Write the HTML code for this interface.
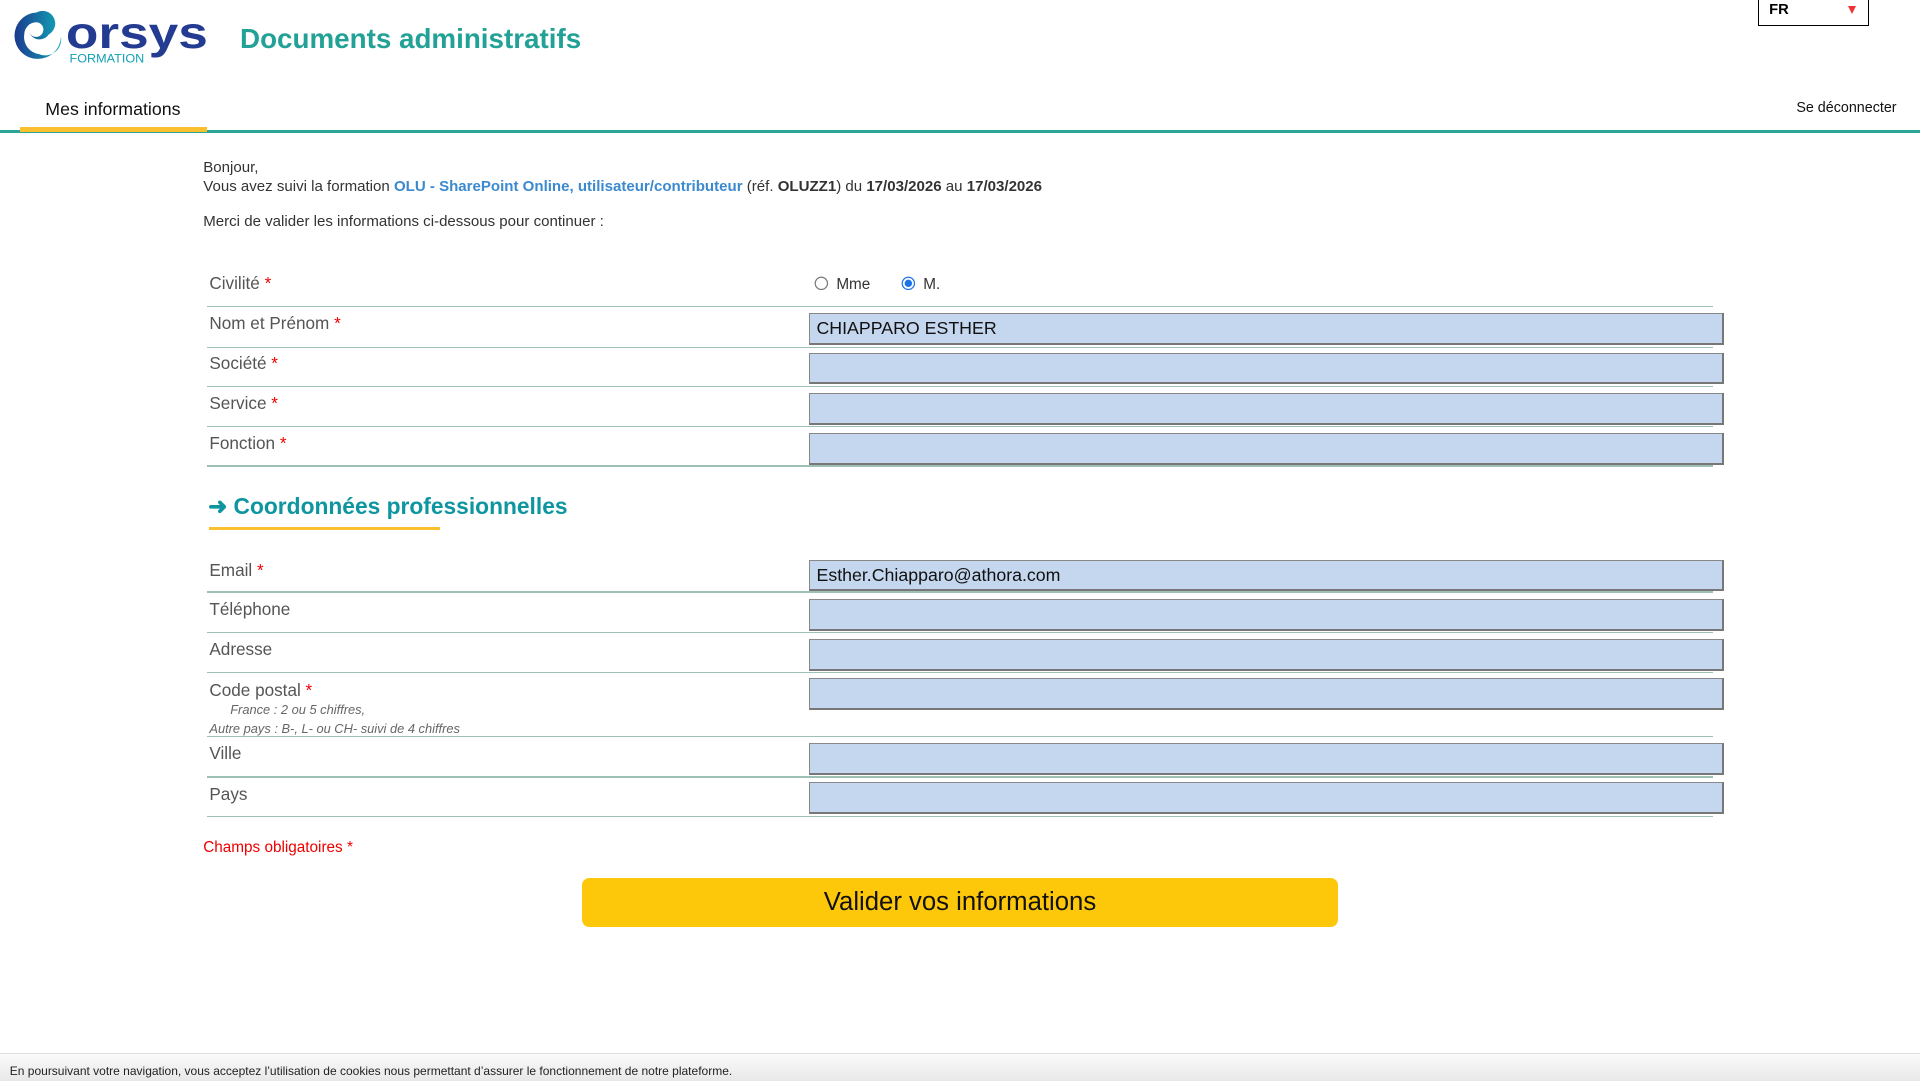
<!DOCTYPE html>
<html><head><meta charset="utf-8"><style>
html,body{margin:0;padding:0;background:#fff;}
body{zoom:1.22449;width:1568px;height:882px;position:relative;overflow:hidden;font-family:"Liberation Sans",sans-serif;color:#333;}
.a{position:absolute;white-space:nowrap;}
.lbl{position:absolute;left:171px;font-size:14px;color:#555;}
.req{color:#e00;}
.inp{position:absolute;left:661px;width:747px;height:26px;background:#c4d7ee;border:1px solid #888;border-right:2px solid #777;border-bottom:2px solid #777;box-sizing:border-box;font-size:14.5px;color:#111;padding-left:5px;line-height:24px;}
.ln{position:absolute;left:169px;width:1230px;height:1px;background:#9cc0b3;}
.t{font-size:12.3px;}
</style></head><body>
<svg class="a" style="left:10px;top:8px" width="162" height="46" viewBox="0 0 162 46">
<defs><linearGradient id="g" x1="0" x2="1"><stop offset="0" stop-color="#1b3a8e"/><stop offset="1" stop-color="#12a8b8"/></linearGradient></defs>
<path d="M20 2 A19 19 0 1 0 40 22 A13 13 0 0 1 22 36 A14 14 0 0 1 10 20 A10 10 0 0 1 20 10 A6 6 0 1 1 14 18 A9 9 0 0 0 30 20 A10 10 0 0 0 20 2Z" fill="url(#g)"/>
<text x="44" y="31" font-family="Liberation Sans" font-weight="bold" font-size="36" fill="#233b91" textLength="116" lengthAdjust="spacingAndGlyphs">orsys</text>
<text x="47" y="43" font-family="Liberation Sans" font-size="10" fill="#12a0b6" textLength="61" lengthAdjust="spacingAndGlyphs">FORMATION</text>
</svg>
<div class="a" style="left:196px;top:19px;font-size:22.7px;font-weight:bold;color:#22a196">Documents administratifs</div>
<div class="a" style="left:1436px;top:-1px;width:89px;height:21px;border:1px solid #000;"><span style="position:absolute;left:8px;top:2px;font-size:12px;font-weight:bold;color:#000">FR</span><span style="position:absolute;left:72px;top:5px;width:0;height:0;border-left:4px solid transparent;border-right:4px solid transparent;border-top:7px solid #e33"></span></div>
<div class="a" style="left:37px;top:81px;font-size:14.5px;color:#111">Mes informations</div>
<div class="a" style="left:1467px;top:82px;font-size:11.7px;color:#111">Se déconnecter</div>
<div class="a" style="left:0;top:106px;width:1568px;height:3px;background:#2aa597"></div>
<div class="a" style="left:16px;top:104px;width:153px;height:4px;background:#fbc02d"></div>
<div class="a t" style="left:166px;top:130px;line-height:15px;color:#333">Bonjour,<br>Vous avez suivi la formation <b style="color:#3b8ad0">OLU - SharePoint Online, utilisateur/contributeur</b> (réf. <b>OLUZZ1</b>) du <b>17/03/2026</b> au <b>17/03/2026</b></div>
<div class="a t" style="left:166px;top:174px;color:#333">Merci de valider les informations ci-dessous pour continuer :</div>

<div class="lbl" style="top:223px">Civilité <span class="req">*</span></div>
<svg class="a" style="left:665px;top:225px" width="12" height="12"><circle cx="6" cy="6" r="5" fill="#fff" stroke="#777"/></svg>
<div class="a" style="left:683px;top:225px;font-size:12.5px;color:#333">Mme</div>
<svg class="a" style="left:736px;top:225px" width="12" height="12"><circle cx="6" cy="6" r="5" fill="#fff" stroke="#1a73e8"/><circle cx="6" cy="6" r="3" fill="#1a73e8"/></svg>
<div class="a" style="left:754px;top:225px;font-size:12.5px;color:#333">M.</div>
<div class="ln" style="top:250px"></div>
<div class="lbl" style="top:256px">Nom et Prénom <span class="req">*</span></div>
<div class="inp" style="top:256px">CHIAPPARO ESTHER</div>
<div class="ln" style="top:283px"></div>
<div class="lbl" style="top:288px">Société <span class="req">*</span></div>
<div class="inp" style="top:288px"></div>
<div class="ln" style="top:315px"></div>
<div class="lbl" style="top:321px">Service <span class="req">*</span></div>
<div class="inp" style="top:321px"></div>
<div class="ln" style="top:348px"></div>
<div class="lbl" style="top:354px">Fonction <span class="req">*</span></div>
<div class="inp" style="top:354px"></div>
<div class="ln" style="top:380px"></div>

<div class="a" style="left:170px;top:403px;font-size:18.6px;font-weight:bold;color:#0e96a0">➜ Coordonnées professionnelles</div>
<div class="a" style="left:171px;top:430px;width:188px;height:3px;background:#fbc02d"></div>

<div class="lbl" style="top:457px">Email <span class="req">*</span></div>
<div class="inp" style="top:457px">Esther.Chiapparo@athora.com</div>
<div class="ln" style="top:483px"></div>
<div class="lbl" style="top:489px">Téléphone</div>
<div class="inp" style="top:489px"></div>
<div class="ln" style="top:516px"></div>
<div class="lbl" style="top:522px">Adresse</div>
<div class="inp" style="top:522px"></div>
<div class="ln" style="top:549px"></div>
<div class="lbl" style="top:555px">Code postal <span class="req">*</span></div>
<div class="a" style="left:188px;top:573px;font-size:10.5px;font-style:italic;color:#666">France : 2 ou 5 chiffres,</div>
<div class="a" style="left:171px;top:589px;font-size:10.5px;font-style:italic;color:#666">Autre pays : B-, L- ou CH- suivi de 4 chiffres</div>
<div class="inp" style="top:554px"></div>
<div class="ln" style="top:601px"></div>
<div class="lbl" style="top:607px">Ville</div>
<div class="inp" style="top:607px"></div>
<div class="ln" style="top:634px"></div>
<div class="lbl" style="top:640px">Pays</div>
<div class="inp" style="top:639px"></div>
<div class="ln" style="top:666px"></div>

<div class="a" style="left:166px;top:685px;font-size:12.5px;color:#e00">Champs obligatoires *</div>
<div class="a" style="left:475px;top:717px;width:618px;height:40px;background:#fec80a;border-radius:6px;text-align:center;line-height:40px;font-size:21px;color:#111">Valider vos informations</div>

<div class="a" style="left:0;top:860px;width:1568px;height:22px;border-top:1px solid #ddd;background:linear-gradient(#fafafa,#e8e8e8)"></div>
<div class="a" style="left:8px;top:869px;font-size:9.8px;color:#222">En poursuivant votre navigation, vous acceptez l’utilisation de cookies nous permettant d’assurer le fonctionnement de notre plateforme.</div>
</body></html>
